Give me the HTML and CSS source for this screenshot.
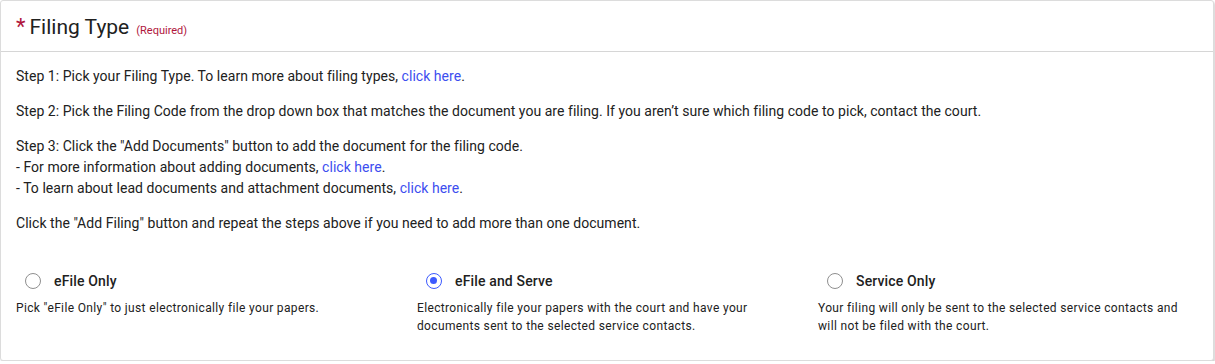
FILE: index.html
```html
<!DOCTYPE html>
<html lang="en">
<head>
    <meta charset="UTF-8">
    <title>Filing Type</title>
    <link rel="stylesheet" href="styles.css">
</head>
<body>
    <div class="card">
        <div class="card-header">
            <span class="req-star">*</span>
            <h2 class="card-title">Filing Type</h2>
            <span class="req-note">(Required)</span>
        </div>
        <div class="card-body">
            <p>Step 1: Pick your Filing Type. To learn more about filing types, <a href="#">click here</a>.</p>
            <p>Step 2: Pick the Filing Code from the drop down box that matches the document you are filing. If you aren’t sure which filing code to pick, contact the court.</p>
            <p>Step 3: Click the "Add Documents" button to add the document for the filing code.<br>
                - For more information about adding documents, <a href="#">click here</a>.<br>
                - To learn about lead documents and attachment documents, <a href="#">click here</a>.</p>
            <p>Click the "Add Filing" button and repeat the steps above if you need to add more than one document.</p>

            <div class="options">
                <div class="option">
                    <label class="radio-row">
                        <span class="radio"></span>
                        <span class="radio-label">eFile Only</span>
                    </label>
                    <div class="option-desc">Pick "eFile Only" to just electronically file your papers.</div>
                </div>
                <div class="option">
                    <label class="radio-row">
                        <span class="radio checked"></span>
                        <span class="radio-label">eFile and Serve</span>
                    </label>
                    <div class="option-desc">Electronically file your papers with the court and have your documents sent to the selected service contacts.</div>
                </div>
                <div class="option">
                    <label class="radio-row">
                        <span class="radio"></span>
                        <span class="radio-label">Service Only</span>
                    </label>
                    <div class="option-desc">Your filing will only be sent to the selected service contacts and will not be filed with the court.</div>
                </div>
            </div>
        </div>
    </div>
</body>
</html>
```

FILE: styles.css
```css
html, body {
    margin: 0;
    padding: 0;
    background: #fff;
}
body {
    font-family: Roboto, "Liberation Sans", Arial, sans-serif;
    color: #212121;
}
.card {
    margin-right: 1px;
    border: 1px solid #dcdcdc;
    border-radius: 3px;
    box-shadow: 1px 2px 2px rgba(0, 0, 0, 0.18);
    background: #fff;
    height: 361px;
    box-sizing: border-box;
}
.card-header {
    display: flex;
    align-items: baseline;
    height: 51px;
    padding: 13px 16px 0 15px;
    border-bottom: 1px solid #d6d6d6;
    box-sizing: border-box;
}
.req-star {
    color: #b0163c;
    font-size: 22px;
    margin-right: 4px;
}
.card-title {
    margin: 0;
    font-size: 21px;
    font-weight: 400;
    color: #212121;
}
.req-note {
    margin-left: 7px;
    font-size: 11px;
    color: #b0163c;
}
.card-body {
    padding: 14px 15px 0 15px;
    font-size: 14px;
    line-height: 21px;
    letter-spacing: 0.04px;
}
.card-body p {
    margin: 0 0 14px 0;
}
.card-body a {
    color: #3d4eef;
    text-decoration: none;
}
.options {
    display: grid;
    grid-template-columns: repeat(3, 379px);
    column-gap: 22px;
    margin-top: 35px;
}
.radio-row {
    display: flex;
    align-items: center;
    height: 24px;
    padding-left: 9px;
}
.radio {
    width: 16px;
    height: 16px;
    border: 1.5px solid #8f8f8f;
    border-radius: 50%;
    box-sizing: border-box;
    position: relative;
    flex-shrink: 0;
}
.radio.checked {
    border-color: #3d5afe;
}
.radio.checked::after {
    content: "";
    position: absolute;
    top: 3px;
    left: 3px;
    width: 7px;
    height: 7px;
    border-radius: 50%;
    background: #3d5afe;
}
.radio-label {
    margin-left: 13px;
    font-weight: 500;
    font-size: 14px;
    letter-spacing: 0.15px;
}
.option-desc {
    margin-top: 6px;
    font-size: 12px;
    line-height: 18px;
    letter-spacing: 0.35px;
    color: #212121;
}
```
